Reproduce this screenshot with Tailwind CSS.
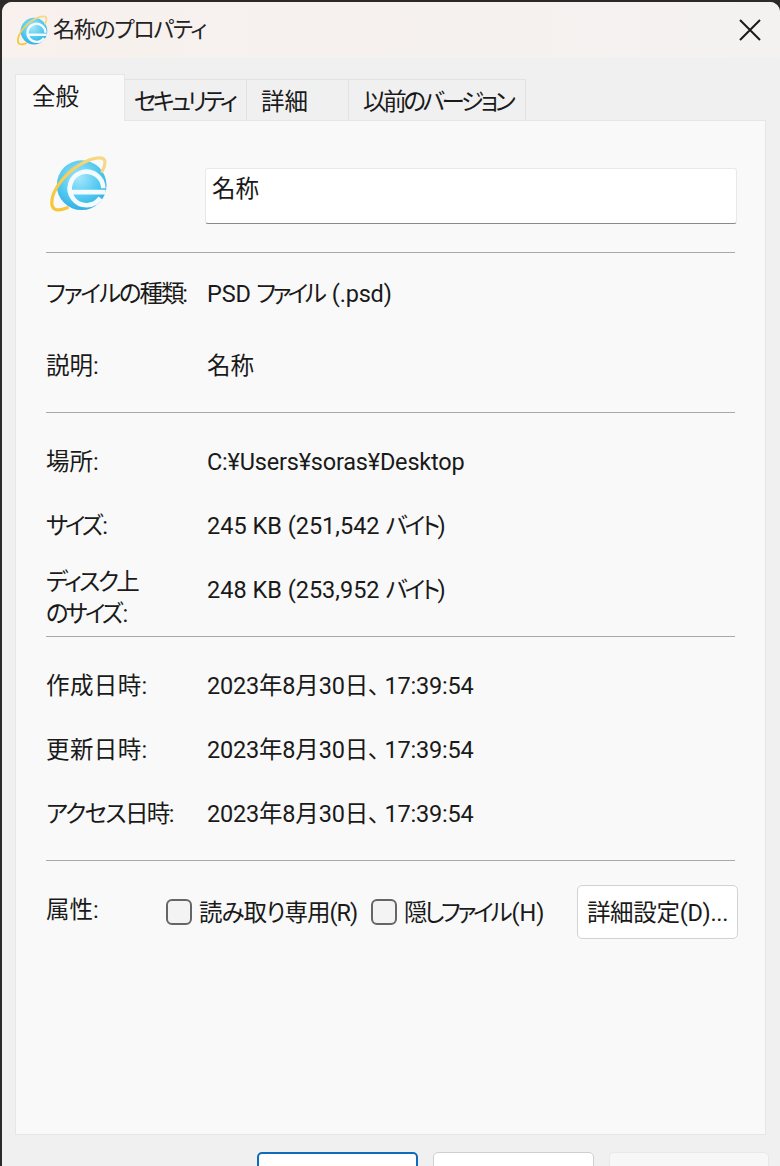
<!DOCTYPE html>
<html lang="ja">
  <head>
    <meta charset="UTF-8" />
    <title>名称のプロパティ</title>
    <script src="https://cdn.jsdelivr.net/npm/@tailwindcss/browser@4"></script>
  </head>
  <body class="bg-[#2b2a29] font-['Roboto','Noto_Sans_CJK_JP',sans-serif] [font-feature-settings:'palt'] text-[#1a1a1a] text-[23.5px] leading-none whitespace-nowrap">
    <svg class="absolute w-0 h-0">
      <defs>
        <radialGradient id="ball" cx="45%" cy="35%" r="70%">
          <stop offset="0" stop-color="#a5e6fa" />
          <stop offset="0.6" stop-color="#4fc8f0" />
          <stop offset="1" stop-color="#2fa9e4" />
        </radialGradient>
        <linearGradient id="orbit" x1="0" y1="1" x2="1" y2="0">
          <stop offset="0" stop-color="#f7c531" />
          <stop offset="1" stop-color="#f6d98a" />
        </linearGradient>
        <symbol id="ie" viewBox="0 0 100 100">
          <circle cx="54.6" cy="52" r="43" fill="url(#ball)" />
          <path d="M36 64 H96 M87 74 A29 29 0 1 1 92 57.5" fill="none" stroke="#f4fbfe" stroke-width="8" />
          <path d="M30 91 C15 97 3 97 3 82 C3 60 30 25 62 11 C80 3 95 2 95 12 C95 17 94 22 90 28" fill="none" stroke="url(#orbit)" stroke-width="5.5" stroke-linecap="round" />
        </symbol>
      </defs>
    </svg>

    <div class="w-[780px] h-[1166px] overflow-hidden pt-[2px] pl-[2px]">
      <div class="h-[1164px] rounded-t-[10px] bg-[#f0f0f0] overflow-hidden">
        <!-- Title bar -->
        <header class="h-[56px] flex items-center bg-gradient-to-r from-[#f8f1ee] to-[#f4f2f1] pl-[15px] pr-[19px]">
          <svg class="w-[31px] h-[31px] mr-[5px]"><use href="#ie" /></svg>
          <span class="text-[22px] text-[#222] tracking-[-1.3px]">名称のプロパティ</span>
          <svg class="ml-auto w-[22px] h-[22px]" viewBox="0 0 22 22">
            <path d="M1 1 L21 21 M21 1 L1 21" stroke="#1a1a1a" stroke-width="2" fill="none" />
          </svg>
        </header>

        <!-- Tabs -->
        <nav class="relative z-10 h-[47px] mt-[16px] -mb-px ml-[13px] flex items-end">
          <div class="w-[110px] h-[47px] pl-[16px] pt-[11px] bg-[#f9f9f9] border border-[#e6e6e6] border-b-0">全般</div>
          <div class="w-[122px] h-[42px] pl-[9px] pt-[11px] border-t border-r border-[#e2e2e2] border-b-[#e6e6e6] border-b tracking-[-3.5px]">セキュリティ</div>
          <div class="w-[102px] h-[42px] pl-[14px] pt-[11px] border-t border-r border-[#e2e2e2] border-b-[#e6e6e6] border-b">詳細</div>
          <div class="w-[177px] h-[42px] pl-[14px] pt-[11px] border-t border-r border-[#e2e2e2] border-b-[#e6e6e6] border-b tracking-[-3.3px]">以前のバージョン</div>
        </nav>

        <!-- General tab -->
        <main class="ml-[13px] w-[751px] h-[1015px] bg-[#f9f9f9] border border-[#e6e6e6] px-[30px]">
          <section class="h-[132px] border-b border-[#a9a9a9] flex pt-[34px]">
            <svg class="w-[58px] h-[58px] ml-[4px]"><use href="#ie" /></svg>
            <div class="ml-[97px] w-[533px] -mr-[2px] h-[56px] mt-[13px] pt-[9px] pl-[6px] bg-white border border-[#e9e9e9] border-b-[#8a8a8a] rounded-[3px]">名称</div>
          </section>

          <section class="h-[160px] border-b border-[#a9a9a9] pt-[10px]">
            <div class="h-[64px] flex items-center"><span class="w-[161px] tracking-[-2.1px]">ファイルの種類:</span><span class="tracking-[-0.2px]">PSD <span class="tracking-[-3.6px] mr-[3px]">ファイル</span> (.psd)</span></div>
            <div class="h-[64px] mt-[8px] flex items-center"><span class="w-[161px]">説明:</span><span>名称</span></div>
          </section>

          <section class="h-[224px] border-b border-[#a9a9a9] pt-[18px]">
            <div class="h-[64px] flex items-center"><span class="w-[161px]">場所:</span><span class="tracking-[-0.2px]">C:¥Users¥soras¥Desktop</span></div>
            <div class="h-[64px] flex items-center"><span class="w-[161px]"><span class="tracking-[-3.2px] mr-[2px]">サイズ</span>:</span><span>245 KB (251,542 <span class="tracking-[-3px]">バイト</span>)</span></div>
            <div class="h-[64px] flex items-center"><span class="w-[161px] mt-[14px] leading-[32px] tracking-[-2.6px]">ディスク上<br /><span class="tracking-[-3px] mr-[2px]">のサイズ</span>:</span><span>248 KB (253,952 <span class="tracking-[-3px]">バイト</span>)</span></div>
          </section>

          <section class="h-[224px] border-b border-[#a9a9a9] pt-[18px]">
            <div class="h-[64px] flex items-center"><span class="w-[161px] tracking-[0.4px]">作成日時:</span><span class="tracking-[-0.2px]">2023年8月30日<span class="mr-[5px]">、</span>17:39:54</span></div>
            <div class="h-[64px] flex items-center"><span class="w-[161px] tracking-[0.4px]">更新日時:</span><span class="tracking-[-0.2px]">2023年8月30日<span class="mr-[5px]">、</span>17:39:54</span></div>
            <div class="h-[64px] flex items-center"><span class="w-[161px] tracking-[-1.6px]">アクセス日時:</span><span class="tracking-[-0.2px]">2023年8月30日<span class="mr-[5px]">、</span>17:39:54</span></div>
          </section>

          <section class="flex items-center h-[54px] mt-[24px] -mr-[3px]">
            <span class="w-[120px] -mt-[2px]">属性:</span>
            <span class="w-[26px] h-[26px] rounded-[6px] border-2 border-[#666] bg-[#f3f3f3]"></span>
            <span class="ml-[7px] w-[159px] mt-[4px] tracking-[-1px]">読み取り専用(R)</span>
            <span class="ml-[13px] w-[26px] h-[26px] rounded-[6px] border-2 border-[#666] bg-[#f3f3f3]"></span>
            <span class="ml-[7px] mt-[4px]"><span class="tracking-[-3.2px] mr-[2px]">隠しファイル</span>(H)</span>
            <button class="ml-auto w-[161px] h-[54px] pt-[4px] rounded-[5px] bg-white border border-[#d2d2d2] tracking-[-0.3px]">詳細設定(D)...</button>
          </section>
        </main>

        <!-- Dialog buttons -->
        <footer class="mt-[17px] flex justify-end gap-[15px] pr-[11px]">
          <div class="w-[161px] h-[54px] rounded-[5px] bg-white border-2 border-[#0f6cbd]"></div>
          <div class="w-[161px] h-[54px] rounded-[5px] bg-white border border-[#cfcfcf]"></div>
          <div class="w-[160px] h-[54px] rounded-[5px] bg-[#f7f7f7] border border-[#e8e8e8]"></div>
        </footer>
      </div>
    </div>
  </body>
</html>
